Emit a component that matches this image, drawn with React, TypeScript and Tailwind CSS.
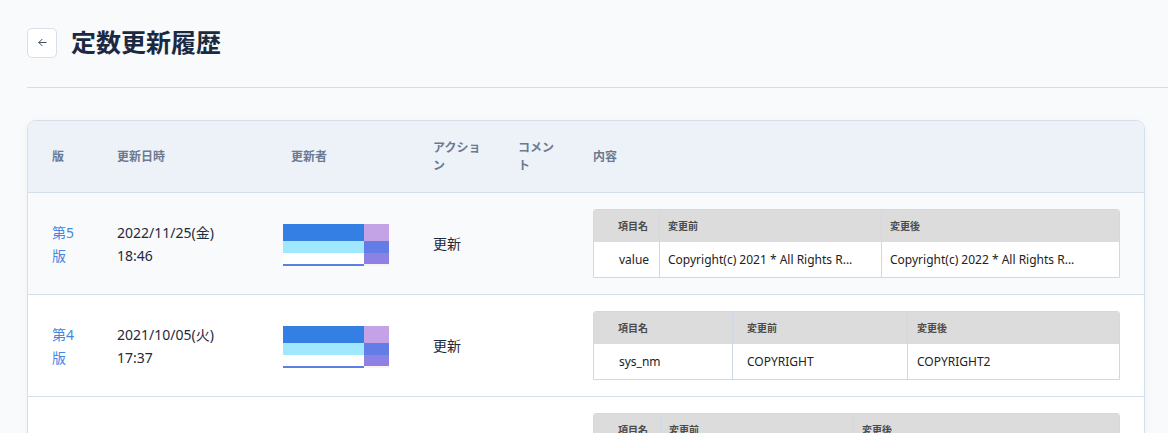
import React from "react";

const font = { fontFamily: '"Noto Sans", "Noto Sans CJK JP", sans-serif' };

function Mosaic() {
  return (
    <div className="flex w-[106px]">
      <div className="flex w-[81px] flex-col">
        <div className="h-[17px] bg-[#347fe4]" />
        <div className="h-[12px] bg-[#a0e8fe]" />
        <div className="h-[11px] bg-white" />
        <div className="h-[2px] bg-[#5b80e0]" />
      </div>
      <div className="flex w-[25px] flex-col">
        <div className="h-[17px] bg-[#c3a3e5]" />
        <div className="h-[12px] bg-[#637ce6]" />
        <div className="h-[11px] bg-[#8c82e6]" />
        <div className="h-[2px] bg-[#fff0f0]" />
      </div>
    </div>
  );
}

type Cell = { text: string; pl: string };

function InnerTable({
  cols,
  head,
  body,
}: {
  cols: string;
  head: Cell[];
  body: Cell[][];
}) {
  return (
    <div className="overflow-hidden rounded-t-[3px] border border-[#cdd9e8] bg-white">
      <div className={`grid ${cols} h-[32px] bg-[#dcdcdc]`}>
        {head.map((c, i) => (
          <div
            key={i}
            className={`flex items-center ${c.pl} text-[10px] font-bold text-[#4b4b4b] whitespace-nowrap ${
              i > 0 ? "border-l border-[#cdd9e8]" : ""
            }`}
          >
            {c.text}
          </div>
        ))}
      </div>
      {body.map((row, ri) => (
        <div
          key={ri}
          className={`grid ${cols} h-[35px] bg-white ${ri > 0 ? "border-t border-[#cdd9e8]" : ""}`}
        >
          {row.map((c, i) => (
            <div
              key={i}
              className={`flex items-center ${c.pl} text-[12px] text-[#222] whitespace-nowrap ${
                i > 0 ? "border-l border-[#cdd9e8]" : ""
              }`}
            >
              {c.text}
            </div>
          ))}
        </div>
      ))}
    </div>
  );
}

type Row = {
  ver: string;
  date: string;
  time: string;
  bg: string;
  cols: string;
  head: Cell[];
  body: Cell[][];
};

const rows: Row[] = [
  {
    ver: "第5版",
    date: "2022/11/25(金)",
    time: "18:46",
    bg: "bg-[#f9fafc]",
    cols: "grid-cols-[65px_222px_1fr]",
    head: [
      { text: "項目名", pl: "pl-6" },
      { text: "変更前", pl: "pl-2" },
      { text: "変更後", pl: "pl-2" },
    ],
    body: [
      [
        { text: "value", pl: "pl-[25px]" },
        { text: "Copyright(c) 2021 * All Rights R...", pl: "pl-2" },
        { text: "Copyright(c) 2022 * All Rights R...", pl: "pl-2" },
      ],
    ],
  },
  {
    ver: "第4版",
    date: "2021/10/05(火)",
    time: "17:37",
    bg: "bg-white",
    cols: "grid-cols-[138px_175px_1fr]",
    head: [
      { text: "項目名", pl: "pl-6" },
      { text: "変更前", pl: "pl-[14px]" },
      { text: "変更後", pl: "pl-[9px]" },
    ],
    body: [
      [
        { text: "sys_nm", pl: "pl-[25px]" },
        { text: "COPYRIGHT", pl: "pl-[14px]" },
        { text: "COPYRIGHT2", pl: "pl-[9px]" },
      ],
    ],
  },
  {
    ver: "第3版",
    date: "2021/04/12(月)",
    time: "10:05",
    bg: "bg-white",
    cols: "grid-cols-[66px_193px_1fr]",
    head: [
      { text: "項目名", pl: "pl-6" },
      { text: "変更前", pl: "pl-2" },
      { text: "変更後", pl: "pl-2" },
    ],
    body: [
      [
        { text: "value", pl: "pl-[25px]" },
        { text: "Copyright(c) 2020 * All Rig...", pl: "pl-2" },
        { text: "Copyright(c) 2021 * All Rights R...", pl: "pl-2" },
      ],
      [
        { text: "note", pl: "pl-[25px]" },
        { text: "-", pl: "pl-2" },
        { text: "フッター表示用", pl: "pl-2" },
      ],
    ],
  },
];

const gridCols = "grid-cols-[77px_174px_142px_85px_75px_1fr]";

export default function App() {
  return (
    <div className="min-h-screen bg-[#f8fafc] pb-10" style={font}>
      <div className="ml-[27px] flex h-[88px] items-center gap-[14px] border-b border-[#d3dce8] pb-[2px]">
        <button className="flex h-[30px] w-[30px] items-center justify-center rounded-[5px] border border-[#d7dfea] bg-white text-[#334155]">
          <svg width="11" height="11" viewBox="0 0 24 24" fill="none" stroke="currentColor" strokeWidth="2" strokeLinecap="round" strokeLinejoin="round">
            <path d="M20 12H4" />
            <path d="M11 19l-7-7 7-7" />
          </svg>
        </button>
        <h1 className="text-[25px] font-bold leading-none text-[#1b2a41]">定数更新履歴</h1>
      </div>

      <div className="ml-[27px] mr-[23px] mt-[32px] overflow-hidden rounded-t-[9px] border border-[#d5dfeb] bg-white shadow-[0_0_12px_rgba(15,23,42,0.03)]">
        <div className={`grid ${gridCols} h-[72px] items-center border-b border-[#d5dfeb] bg-[#edf2f9] text-[12px] font-bold leading-[18px] text-[#6b7a90]`}>
          <div className="pl-6">版</div>
          <div className="pl-3">更新日時</div>
          <div className="pl-3">更新者</div>
          <div className="pl-3">
            <div className="w-[56px]">アクション</div>
          </div>
          <div className="pl-3">
            <div className="w-[40px]">コメント</div>
          </div>
          <div className="pl-3">内容</div>
        </div>

        {rows.map((r, i) => (
          <div
            key={i}
            className={`grid ${gridCols} items-center border-b border-[#d5dfeb] py-4 text-[14px] leading-[23px] text-[#1e293b] ${r.bg}`}
          >
            <div className="pl-6">
              <div className="w-[26px] text-[#4a86e0]">{r.ver}</div>
            </div>
            <div className="pl-3">
              <div>{r.date}</div>
              <div>{r.time}</div>
            </div>
            <div className="pl-1 pt-[3px]">
              <Mosaic />
            </div>
            <div className="pl-3">更新</div>
            <div className="pl-3" />
            <div className="pl-3 pr-6">
              <InnerTable cols={r.cols} head={r.head} body={r.body} />
            </div>
          </div>
        ))}
      </div>
    </div>
  );
}
